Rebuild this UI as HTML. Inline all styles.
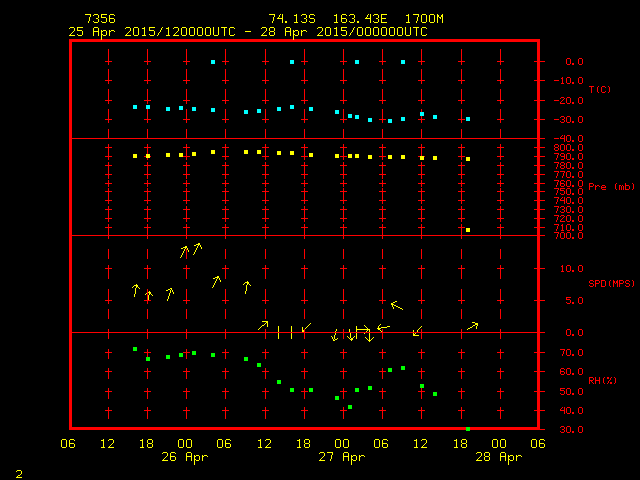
<!DOCTYPE html>
<html><head><meta charset="utf-8"><style>
html,body{margin:0;padding:0;background:#000;width:640px;height:480px;overflow:hidden}
svg{position:absolute;left:0;top:0}
</style></head><body>
<svg width="640" height="480" viewBox="0 0 640 480">
<rect x="0" y="0" width="640" height="480" fill="#000"/>
<defs><path id="l0" d="M0 0h6v1h-6zM5 1h1v1h-1zM5 2h1v1h-1zM4 3h1v1h-1zM4 4h1v1h-1zM4 5h1v1h-1zM4 6h1v1h-1zM3 7h1v1h-1zM3 8h1v1h-1z"/><path id="l1" d="M1 0h4v1h-4zM0 1h1v1h-1zM5 1h1v1h-1zM5 2h1v1h-1zM5 3h1v1h-1zM3 4h2v1h-2zM5 5h1v1h-1zM5 6h1v1h-1zM0 7h1v1h-1zM5 7h1v1h-1zM1 8h4v1h-4z"/><path id="l2" d="M0 0h6v1h-6zM0 1h1v1h-1zM0 2h1v1h-1zM0 3h5v1h-5zM5 4h1v1h-1zM5 5h1v1h-1zM5 6h1v1h-1zM0 7h1v1h-1zM5 7h1v1h-1zM1 8h4v1h-4z"/><path id="l3" d="M1 0h4v1h-4zM0 1h1v1h-1zM5 1h1v1h-1zM0 2h1v1h-1zM0 3h1v1h-1zM0 4h5v1h-5zM0 5h1v1h-1zM5 5h1v1h-1zM0 6h1v1h-1zM5 6h1v1h-1zM0 7h1v1h-1zM5 7h1v1h-1zM1 8h4v1h-4z"/><path id="l4" d="M3 0h1v1h-1zM5 0h1v1h-1zM2 1h1v1h-1zM5 1h1v1h-1zM2 2h1v1h-1zM5 2h1v1h-1zM1 3h1v1h-1zM5 3h1v1h-1zM0 4h6v1h-6zM5 5h1v1h-1zM5 6h1v1h-1zM5 7h1v1h-1zM5 8h1v1h-1z"/><path id="l5" d="M0 7h2v1h-2zM0 8h2v1h-2z"/><path id="l6" d="M3 0h1v1h-1zM1 1h3v1h-3zM3 2h1v1h-1zM3 3h1v1h-1zM3 4h1v1h-1zM3 5h1v1h-1zM3 6h1v1h-1zM3 7h1v1h-1zM1 8h4v1h-4z"/><path id="l7" d="M1 0h4v1h-4zM0 1h1v1h-1zM5 1h1v1h-1zM0 2h1v1h-1zM0 3h1v1h-1zM1 4h4v1h-4zM5 5h1v1h-1zM5 6h1v1h-1zM0 7h1v1h-1zM5 7h1v1h-1zM1 8h4v1h-4z"/><path id="l8" d="M0 0h6v1h-6zM0 1h1v1h-1zM0 2h1v1h-1zM0 3h1v1h-1zM0 4h5v1h-5zM0 5h1v1h-1zM0 6h1v1h-1zM0 7h1v1h-1zM0 8h6v1h-6z"/><path id="l9" d="M1 0h4v1h-4zM0 1h1v1h-1zM5 1h1v1h-1zM0 2h1v1h-1zM5 2h1v1h-1zM0 3h1v1h-1zM5 3h1v1h-1zM0 4h1v1h-1zM5 4h1v1h-1zM0 5h1v1h-1zM5 5h1v1h-1zM0 6h1v1h-1zM5 6h1v1h-1zM0 7h1v1h-1zM5 7h1v1h-1zM1 8h4v1h-4z"/><path id="l10" d="M0 0h1v1h-1zM5 0h1v1h-1zM0 1h2v1h-2zM4 1h2v1h-2zM0 2h2v1h-2zM4 2h2v1h-2zM0 3h1v1h-1zM2 3h2v1h-2zM5 3h1v1h-1zM0 4h1v1h-1zM3 4h1v1h-1zM5 4h1v1h-1zM0 5h1v1h-1zM5 5h1v1h-1zM0 6h1v1h-1zM5 6h1v1h-1zM0 7h1v1h-1zM5 7h1v1h-1zM0 8h1v1h-1zM5 8h1v1h-1z"/><path id="l11" d="M1 0h4v1h-4zM0 1h1v1h-1zM5 1h1v1h-1zM5 2h1v1h-1zM5 3h1v1h-1zM4 4h1v1h-1zM3 5h1v1h-1zM2 6h1v1h-1zM1 7h1v1h-1zM0 8h6v1h-6z"/><path id="l12" d="M1 0h4v1h-4zM0 1h1v1h-1zM5 1h1v1h-1zM0 2h1v1h-1zM5 2h1v1h-1zM0 3h1v1h-1zM5 3h1v1h-1zM0 4h6v1h-6zM0 5h1v1h-1zM5 5h1v1h-1zM0 6h1v1h-1zM5 6h1v1h-1zM0 7h1v1h-1zM5 7h1v1h-1zM0 8h1v1h-1zM5 8h1v1h-1z"/><path id="l13" d="M0 3h1v1h-1zM2 3h3v1h-3zM0 4h2v1h-2zM5 4h1v1h-1zM0 5h1v1h-1zM5 5h1v1h-1zM0 6h1v1h-1zM5 6h1v1h-1zM0 7h2v1h-2zM5 7h1v1h-1zM0 8h1v1h-1zM2 8h3v1h-3zM0 9h1v1h-1zM0 10h1v1h-1zM0 11h1v1h-1zM0 12h1v1h-1z"/><path id="l14" d="M0 3h1v1h-1zM2 3h3v1h-3zM0 4h2v1h-2zM5 4h1v1h-1zM0 5h1v1h-1zM0 6h1v1h-1zM0 7h1v1h-1zM0 8h1v1h-1z"/><path id="l15" d="M5 0h1v1h-1zM4 1h1v1h-1zM4 2h1v1h-1zM3 3h1v1h-1zM3 4h1v1h-1zM2 5h1v1h-1zM1 6h1v1h-1zM1 7h1v1h-1zM0 8h1v1h-1z"/><path id="l16" d="M0 0h1v1h-1zM5 0h1v1h-1zM0 1h1v1h-1zM5 1h1v1h-1zM0 2h1v1h-1zM5 2h1v1h-1zM0 3h1v1h-1zM5 3h1v1h-1zM0 4h1v1h-1zM5 4h1v1h-1zM0 5h1v1h-1zM5 5h1v1h-1zM0 6h1v1h-1zM5 6h1v1h-1zM0 7h1v1h-1zM5 7h1v1h-1zM1 8h4v1h-4z"/><path id="l17" d="M0 0h6v1h-6zM3 1h1v1h-1zM3 2h1v1h-1zM3 3h1v1h-1zM3 4h1v1h-1zM3 5h1v1h-1zM3 6h1v1h-1zM3 7h1v1h-1zM3 8h1v1h-1z"/><path id="l18" d="M1 0h4v1h-4zM0 1h1v1h-1zM5 1h1v1h-1zM0 2h1v1h-1zM0 3h1v1h-1zM0 4h1v1h-1zM0 5h1v1h-1zM0 6h1v1h-1zM0 7h1v1h-1zM5 7h1v1h-1zM1 8h4v1h-4z"/><path id="l19" d="M0 4h6v1h-6z"/><path id="l20" d="M1 0h4v1h-4zM0 1h1v1h-1zM5 1h1v1h-1zM0 2h1v1h-1zM5 2h1v1h-1zM0 3h1v1h-1zM5 3h1v1h-1zM1 4h4v1h-4zM0 5h1v1h-1zM5 5h1v1h-1zM0 6h1v1h-1zM5 6h1v1h-1zM0 7h1v1h-1zM5 7h1v1h-1zM1 8h4v1h-4z"/><path id="tiny2" d="M1 0h4v1h-4zM0 1h1v1h-1zM5 1h1v1h-1zM5 2h1v1h-1zM5 3h1v1h-1zM4 4h1v1h-1zM2 5h2v1h-2zM1 6h1v1h-1zM0 7h6v1h-6z"/><path id="s21" d="M1 0h3v1h-3zM0 1h1v1h-1zM4 1h1v1h-1zM0 2h1v1h-1zM4 2h1v1h-1zM0 3h1v1h-1zM4 3h1v1h-1zM0 4h1v1h-1zM4 4h1v1h-1zM0 5h1v1h-1zM4 5h1v1h-1zM1 6h3v1h-3z"/><path id="s22" d="M0 5h2v1h-2zM0 6h2v1h-2z"/><path id="s23" d="M0 3h5v1h-5z"/><path id="s24" d="M2 0h1v1h-1zM1 1h2v1h-2zM2 2h1v1h-1zM2 3h1v1h-1zM2 4h1v1h-1zM2 5h1v1h-1zM1 6h3v1h-3z"/><path id="s25" d="M1 0h3v1h-3zM0 1h1v1h-1zM4 1h1v1h-1zM3 2h1v1h-1zM2 3h1v1h-1zM1 4h1v1h-1zM0 5h1v1h-1zM0 6h5v1h-5z"/><path id="s26" d="M1 0h3v1h-3zM0 1h1v1h-1zM4 1h1v1h-1zM4 2h1v1h-1zM2 3h2v1h-2zM4 4h1v1h-1zM0 5h1v1h-1zM4 5h1v1h-1zM1 6h3v1h-3z"/><path id="s27" d="M2 0h1v1h-1zM4 0h1v1h-1zM1 1h1v1h-1zM4 1h1v1h-1zM0 2h1v1h-1zM4 2h1v1h-1zM0 3h5v1h-5zM4 4h1v1h-1zM4 5h1v1h-1zM4 6h1v1h-1z"/><path id="s28" d="M1 0h3v1h-3zM0 1h1v1h-1zM4 1h1v1h-1zM0 2h1v1h-1zM4 2h1v1h-1zM1 3h3v1h-3zM0 4h1v1h-1zM4 4h1v1h-1zM0 5h1v1h-1zM4 5h1v1h-1zM1 6h3v1h-3z"/><path id="s29" d="M0 0h5v1h-5zM4 1h1v1h-1zM3 2h1v1h-1zM3 3h1v1h-1zM3 4h1v1h-1zM2 5h1v1h-1zM2 6h1v1h-1z"/><path id="s30" d="M1 0h3v1h-3zM0 1h1v1h-1zM4 1h1v1h-1zM0 2h1v1h-1zM4 2h1v1h-1zM1 3h4v1h-4zM4 4h1v1h-1zM4 5h1v1h-1zM1 6h3v1h-3z"/><path id="s31" d="M1 0h3v1h-3zM0 1h1v1h-1zM4 1h1v1h-1zM0 2h1v1h-1zM0 3h4v1h-4zM0 4h1v1h-1zM4 4h1v1h-1zM0 5h1v1h-1zM4 5h1v1h-1zM1 6h3v1h-3z"/><path id="s32" d="M0 0h5v1h-5zM0 1h1v1h-1zM0 2h4v1h-4zM4 3h1v1h-1zM4 4h1v1h-1zM0 5h1v1h-1zM4 5h1v1h-1zM1 6h3v1h-3z"/><path id="s33" d="M0 0h5v1h-5zM2 1h1v1h-1zM2 2h1v1h-1zM2 3h1v1h-1zM2 4h1v1h-1zM2 5h1v1h-1zM2 6h1v1h-1z"/><path id="s34" d="M3 0h1v1h-1zM2 1h1v1h-1zM2 2h1v1h-1zM2 3h1v1h-1zM2 4h1v1h-1zM2 5h1v1h-1zM3 6h1v1h-1z"/><path id="s35" d="M1 0h3v1h-3zM0 1h1v1h-1zM4 1h1v1h-1zM0 2h1v1h-1zM0 3h1v1h-1zM0 4h1v1h-1zM0 5h1v1h-1zM4 5h1v1h-1zM1 6h3v1h-3z"/><path id="s36" d="M1 0h1v1h-1zM2 1h1v1h-1zM2 2h1v1h-1zM2 3h1v1h-1zM2 4h1v1h-1zM2 5h1v1h-1zM1 6h1v1h-1z"/><path id="s37" d="M0 0h4v1h-4zM0 1h1v1h-1zM4 1h1v1h-1zM0 2h1v1h-1zM4 2h1v1h-1zM0 3h4v1h-4zM0 4h1v1h-1zM0 5h1v1h-1zM0 6h1v1h-1z"/><path id="s38" d="M0 2h1v1h-1zM2 2h2v1h-2zM0 3h2v1h-2zM4 3h1v1h-1zM0 4h1v1h-1zM0 5h1v1h-1zM0 6h1v1h-1z"/><path id="s39" d="M1 2h3v1h-3zM0 3h1v1h-1zM4 3h1v1h-1zM0 4h5v1h-5zM0 5h1v1h-1zM1 6h4v1h-4z"/><path id="s40" d="M0 2h2v1h-2zM3 2h1v1h-1zM0 3h1v1h-1zM2 3h1v1h-1zM4 3h1v1h-1zM0 4h1v1h-1zM2 4h1v1h-1zM4 4h1v1h-1zM0 5h1v1h-1zM2 5h1v1h-1zM4 5h1v1h-1zM0 6h1v1h-1zM2 6h1v1h-1zM4 6h1v1h-1z"/><path id="s41" d="M0 0h1v1h-1zM0 1h1v1h-1zM0 2h4v1h-4zM0 3h1v1h-1zM4 3h1v1h-1zM0 4h1v1h-1zM4 4h1v1h-1zM0 5h1v1h-1zM4 5h1v1h-1zM0 6h4v1h-4z"/><path id="s42" d="M1 0h3v1h-3zM0 1h1v1h-1zM4 1h1v1h-1zM0 2h1v1h-1zM1 3h3v1h-3zM4 4h1v1h-1zM0 5h1v1h-1zM4 5h1v1h-1zM1 6h3v1h-3z"/><path id="s43" d="M0 0h4v1h-4zM0 1h1v1h-1zM4 1h1v1h-1zM0 2h1v1h-1zM4 2h1v1h-1zM0 3h1v1h-1zM4 3h1v1h-1zM0 4h1v1h-1zM4 4h1v1h-1zM0 5h1v1h-1zM4 5h1v1h-1zM0 6h4v1h-4z"/><path id="s44" d="M0 0h1v1h-1zM4 0h1v1h-1zM0 1h2v1h-2zM3 1h2v1h-2zM0 2h2v1h-2zM3 2h2v1h-2zM0 3h1v1h-1zM2 3h1v1h-1zM4 3h1v1h-1zM0 4h1v1h-1zM4 4h1v1h-1zM0 5h1v1h-1zM4 5h1v1h-1zM0 6h1v1h-1zM4 6h1v1h-1z"/><path id="s45" d="M0 0h4v1h-4zM0 1h1v1h-1zM4 1h1v1h-1zM0 2h1v1h-1zM4 2h1v1h-1zM0 3h4v1h-4zM0 4h1v1h-1zM2 4h1v1h-1zM0 5h1v1h-1zM3 5h1v1h-1zM0 6h1v1h-1zM4 6h1v1h-1z"/><path id="s46" d="M0 0h1v1h-1zM4 0h1v1h-1zM0 1h1v1h-1zM4 1h1v1h-1zM0 2h1v1h-1zM4 2h1v1h-1zM0 3h5v1h-5zM0 4h1v1h-1zM4 4h1v1h-1zM0 5h1v1h-1zM4 5h1v1h-1zM0 6h1v1h-1zM4 6h1v1h-1z"/><path id="s47" d="M0 0h2v1h-2zM4 0h1v1h-1zM0 1h2v1h-2zM3 1h1v1h-1zM3 2h1v1h-1zM2 3h1v1h-1zM1 4h1v1h-1zM1 5h1v1h-1zM3 5h2v1h-2zM0 6h1v1h-1zM3 6h2v1h-2z"/></defs>
<g shape-rendering="crispEdges"><path d="M132 287h1v1h-1zM133 286h1v1h-1zM134 285h1v1h-1zM134 294h1v3h-1zM135 285h1v1h-1zM135 288h1v6h-1zM136 284h1v4h-1zM137 285h1v2h-1zM138 287h1v1h-1zM139 288h1v1h-1zM145 294h1v1h-1zM146 293h1v1h-1zM147 292h1v1h-1zM147 301h1v3h-1zM148 292h1v1h-1zM148 295h1v6h-1zM149 291h1v4h-1zM150 292h1v2h-1zM151 294h1v1h-1zM152 295h1v1h-1zM166 290h1v1h-1zM167 290h1v1h-1zM167 299h1v2h-1zM168 289h1v1h-1zM168 296h1v3h-1zM169 289h1v1h-1zM169 293h1v3h-1zM170 288h1v1h-1zM170 290h1v3h-1zM171 288h1v2h-1zM172 290h1v2h-1zM173 292h1v2h-1zM180 257h1v1h-1zM181 248h1v1h-1zM181 255h1v2h-1zM182 248h1v1h-1zM182 253h1v2h-1zM183 247h1v1h-1zM183 251h1v2h-1zM184 247h1v1h-1zM184 249h1v2h-1zM185 246h1v3h-1zM186 246h1v2h-1zM187 248h1v2h-1zM188 250h1v2h-1zM193 254h1v1h-1zM194 245h1v1h-1zM194 252h1v2h-1zM195 245h1v1h-1zM195 250h1v2h-1zM196 244h1v1h-1zM196 248h1v2h-1zM197 244h1v1h-1zM197 246h1v2h-1zM198 243h1v3h-1zM199 243h1v2h-1zM200 245h1v2h-1zM201 247h1v2h-1zM212 287h1v1h-1zM213 278h1v1h-1zM213 285h1v2h-1zM214 278h1v1h-1zM214 283h1v2h-1zM215 277h1v1h-1zM215 281h1v2h-1zM216 277h1v1h-1zM216 279h1v2h-1zM217 276h1v3h-1zM218 276h1v2h-1zM219 278h1v2h-1zM220 280h1v2h-1zM243 284h1v1h-1zM244 283h1v1h-1zM245 282h1v1h-1zM245 291h1v3h-1zM246 282h1v1h-1zM246 285h1v6h-1zM247 281h1v4h-1zM248 282h1v2h-1zM249 284h1v1h-1zM250 285h1v1h-1zM258 329h1v1h-1zM259 328h1v1h-1zM260 327h1v1h-1zM261 326h1v1h-1zM262 321h1v1h-1zM262 325h1v1h-1zM263 321h1v1h-1zM263 325h1v1h-1zM264 321h1v1h-1zM264 324h1v1h-1zM265 321h1v1h-1zM265 323h1v1h-1zM266 321h1v2h-1zM267 321h1v6h-1zM278 326h1v13h-1zM291 326h1v13h-1zM302 327h1v5h-1zM303 330h1v2h-1zM304 329h1v1h-1zM305 328h1v1h-1zM306 327h1v1h-1zM307 326h1v1h-1zM308 325h1v1h-1zM309 324h1v1h-1zM310 323h1v1h-1zM331 336h1v1h-1zM332 337h1v2h-1zM333 339h1v2h-1zM334 335h1v4h-1zM334 340h1v1h-1zM335 331h1v4h-1zM335 339h1v1h-1zM336 329h1v2h-1zM336 339h1v1h-1zM337 338h1v1h-1zM347 336h1v1h-1zM348 337h1v1h-1zM349 329h1v3h-1zM349 338h1v1h-1zM350 332h1v6h-1zM350 339h1v1h-1zM351 338h1v3h-1zM352 338h1v2h-1zM353 337h1v1h-1zM354 336h1v1h-1zM356 326h1v13h-1zM357 329h1v1h-1zM358 329h1v1h-1zM359 329h1v1h-1zM360 329h1v1h-1zM361 329h1v1h-1zM362 329h1v1h-1zM363 329h1v1h-1zM364 325h1v1h-1zM364 329h1v1h-1zM364 333h1v1h-1zM365 326h1v1h-1zM365 329h1v1h-1zM365 332h1v1h-1zM365 337h1v1h-1zM366 327h1v1h-1zM366 329h1v1h-1zM366 331h1v1h-1zM366 338h1v1h-1zM367 328h1v3h-1zM367 339h1v1h-1zM368 329h1v1h-1zM368 340h1v1h-1zM369 329h1v13h-1zM370 340h1v1h-1zM371 339h1v1h-1zM372 338h1v1h-1zM373 337h1v1h-1zM377 328h1v1h-1zM378 326h1v4h-1zM379 325h1v1h-1zM379 328h1v2h-1zM380 324h1v1h-1zM380 328h1v1h-1zM380 330h1v1h-1zM381 327h1v1h-1zM381 331h1v1h-1zM382 327h1v1h-1zM383 327h1v1h-1zM384 327h1v1h-1zM385 327h1v1h-1zM386 327h1v1h-1zM387 326h1v1h-1zM388 326h1v1h-1zM389 326h1v1h-1zM391 303h1v2h-1zM392 303h1v4h-1zM393 302h1v1h-1zM393 304h1v1h-1zM393 307h1v2h-1zM394 302h1v1h-1zM394 305h1v1h-1zM395 301h1v1h-1zM395 305h1v1h-1zM396 301h1v1h-1zM396 306h1v1h-1zM397 306h1v1h-1zM398 307h1v1h-1zM399 307h1v1h-1zM400 308h1v1h-1zM401 308h1v1h-1zM402 309h1v1h-1zM413 330h1v6h-1zM414 334h1v2h-1zM415 333h1v1h-1zM415 335h1v1h-1zM416 332h1v1h-1zM416 335h1v1h-1zM417 330h1v2h-1zM417 335h1v1h-1zM418 329h1v1h-1zM418 335h1v1h-1zM419 328h1v1h-1zM420 327h1v1h-1zM421 326h1v1h-1zM467 329h1v1h-1zM468 328h1v1h-1zM469 328h1v1h-1zM470 327h1v1h-1zM471 327h1v1h-1zM472 322h1v1h-1zM472 326h1v1h-1zM473 322h1v1h-1zM473 325h1v1h-1zM474 322h1v1h-1zM474 325h1v1h-1zM475 323h1v2h-1zM476 323h1v2h-1zM476 326h1v3h-1zM477 323h1v3h-1z" fill="#ffff00"/><rect x="108" y="49" width="1" height="10" fill="#ff0000"/><rect x="108" y="69" width="1" height="10" fill="#ff0000"/><rect x="108" y="89" width="1" height="10" fill="#ff0000"/><rect x="108" y="109" width="1" height="10" fill="#ff0000"/><rect x="108" y="129" width="1" height="10" fill="#ff0000"/><rect x="108" y="149" width="1" height="10" fill="#ff0000"/><rect x="108" y="169" width="1" height="10" fill="#ff0000"/><rect x="108" y="189" width="1" height="10" fill="#ff0000"/><rect x="108" y="209" width="1" height="10" fill="#ff0000"/><rect x="108" y="229" width="1" height="10" fill="#ff0000"/><rect x="108" y="249" width="1" height="10" fill="#ff0000"/><rect x="108" y="269" width="1" height="10" fill="#ff0000"/><rect x="108" y="289" width="1" height="10" fill="#ff0000"/><rect x="108" y="309" width="1" height="10" fill="#ff0000"/><rect x="108" y="329" width="1" height="10" fill="#ff0000"/><rect x="108" y="349" width="1" height="10" fill="#ff0000"/><rect x="108" y="369" width="1" height="10" fill="#ff0000"/><rect x="108" y="389" width="1" height="10" fill="#ff0000"/><rect x="108" y="409" width="1" height="10" fill="#ff0000"/><rect x="108" y="58" width="1" height="7" fill="#ff0000"/><rect x="105" y="61" width="7" height="1" fill="#ff0000"/><rect x="108" y="77" width="1" height="7" fill="#ff0000"/><rect x="105" y="80" width="7" height="1" fill="#ff0000"/><rect x="108" y="97" width="1" height="7" fill="#ff0000"/><rect x="105" y="100" width="7" height="1" fill="#ff0000"/><rect x="108" y="116" width="1" height="7" fill="#ff0000"/><rect x="105" y="119" width="7" height="1" fill="#ff0000"/><rect x="108" y="144" width="1" height="7" fill="#ff0000"/><rect x="105" y="147" width="7" height="1" fill="#ff0000"/><rect x="108" y="153" width="1" height="7" fill="#ff0000"/><rect x="105" y="156" width="7" height="1" fill="#ff0000"/><rect x="108" y="162" width="1" height="7" fill="#ff0000"/><rect x="105" y="165" width="7" height="1" fill="#ff0000"/><rect x="108" y="171" width="1" height="7" fill="#ff0000"/><rect x="105" y="174" width="7" height="1" fill="#ff0000"/><rect x="108" y="180" width="1" height="7" fill="#ff0000"/><rect x="105" y="183" width="7" height="1" fill="#ff0000"/><rect x="108" y="188" width="1" height="7" fill="#ff0000"/><rect x="105" y="191" width="7" height="1" fill="#ff0000"/><rect x="108" y="197" width="1" height="7" fill="#ff0000"/><rect x="105" y="200" width="7" height="1" fill="#ff0000"/><rect x="108" y="206" width="1" height="7" fill="#ff0000"/><rect x="105" y="209" width="7" height="1" fill="#ff0000"/><rect x="108" y="215" width="1" height="7" fill="#ff0000"/><rect x="105" y="218" width="7" height="1" fill="#ff0000"/><rect x="108" y="224" width="1" height="7" fill="#ff0000"/><rect x="105" y="227" width="7" height="1" fill="#ff0000"/><rect x="108" y="265" width="1" height="7" fill="#ff0000"/><rect x="105" y="268" width="7" height="1" fill="#ff0000"/><rect x="108" y="297" width="1" height="7" fill="#ff0000"/><rect x="105" y="300" width="7" height="1" fill="#ff0000"/><rect x="108" y="349" width="1" height="7" fill="#ff0000"/><rect x="105" y="352" width="7" height="1" fill="#ff0000"/><rect x="108" y="368" width="1" height="7" fill="#ff0000"/><rect x="105" y="371" width="7" height="1" fill="#ff0000"/><rect x="108" y="388" width="1" height="7" fill="#ff0000"/><rect x="105" y="391" width="7" height="1" fill="#ff0000"/><rect x="108" y="407" width="1" height="7" fill="#ff0000"/><rect x="105" y="410" width="7" height="1" fill="#ff0000"/><rect x="147" y="49" width="1" height="10" fill="#ff0000"/><rect x="147" y="69" width="1" height="10" fill="#ff0000"/><rect x="147" y="89" width="1" height="10" fill="#ff0000"/><rect x="147" y="109" width="1" height="10" fill="#ff0000"/><rect x="147" y="129" width="1" height="10" fill="#ff0000"/><rect x="147" y="149" width="1" height="10" fill="#ff0000"/><rect x="147" y="169" width="1" height="10" fill="#ff0000"/><rect x="147" y="189" width="1" height="10" fill="#ff0000"/><rect x="147" y="209" width="1" height="10" fill="#ff0000"/><rect x="147" y="229" width="1" height="10" fill="#ff0000"/><rect x="147" y="249" width="1" height="10" fill="#ff0000"/><rect x="147" y="269" width="1" height="10" fill="#ff0000"/><rect x="147" y="289" width="1" height="10" fill="#ff0000"/><rect x="147" y="309" width="1" height="10" fill="#ff0000"/><rect x="147" y="329" width="1" height="10" fill="#ff0000"/><rect x="147" y="349" width="1" height="10" fill="#ff0000"/><rect x="147" y="369" width="1" height="10" fill="#ff0000"/><rect x="147" y="389" width="1" height="10" fill="#ff0000"/><rect x="147" y="409" width="1" height="10" fill="#ff0000"/><rect x="147" y="58" width="1" height="7" fill="#ff0000"/><rect x="144" y="61" width="7" height="1" fill="#ff0000"/><rect x="147" y="77" width="1" height="7" fill="#ff0000"/><rect x="144" y="80" width="7" height="1" fill="#ff0000"/><rect x="147" y="97" width="1" height="7" fill="#ff0000"/><rect x="144" y="100" width="7" height="1" fill="#ff0000"/><rect x="147" y="116" width="1" height="7" fill="#ff0000"/><rect x="144" y="119" width="7" height="1" fill="#ff0000"/><rect x="147" y="144" width="1" height="7" fill="#ff0000"/><rect x="144" y="147" width="7" height="1" fill="#ff0000"/><rect x="147" y="153" width="1" height="7" fill="#ff0000"/><rect x="144" y="156" width="7" height="1" fill="#ff0000"/><rect x="147" y="162" width="1" height="7" fill="#ff0000"/><rect x="144" y="165" width="7" height="1" fill="#ff0000"/><rect x="147" y="171" width="1" height="7" fill="#ff0000"/><rect x="144" y="174" width="7" height="1" fill="#ff0000"/><rect x="147" y="180" width="1" height="7" fill="#ff0000"/><rect x="144" y="183" width="7" height="1" fill="#ff0000"/><rect x="147" y="188" width="1" height="7" fill="#ff0000"/><rect x="144" y="191" width="7" height="1" fill="#ff0000"/><rect x="147" y="197" width="1" height="7" fill="#ff0000"/><rect x="144" y="200" width="7" height="1" fill="#ff0000"/><rect x="147" y="206" width="1" height="7" fill="#ff0000"/><rect x="144" y="209" width="7" height="1" fill="#ff0000"/><rect x="147" y="215" width="1" height="7" fill="#ff0000"/><rect x="144" y="218" width="7" height="1" fill="#ff0000"/><rect x="147" y="224" width="1" height="7" fill="#ff0000"/><rect x="144" y="227" width="7" height="1" fill="#ff0000"/><rect x="147" y="265" width="1" height="7" fill="#ff0000"/><rect x="144" y="268" width="7" height="1" fill="#ff0000"/><rect x="147" y="297" width="1" height="7" fill="#ff0000"/><rect x="144" y="300" width="7" height="1" fill="#ff0000"/><rect x="147" y="349" width="1" height="7" fill="#ff0000"/><rect x="144" y="352" width="7" height="1" fill="#ff0000"/><rect x="147" y="368" width="1" height="7" fill="#ff0000"/><rect x="144" y="371" width="7" height="1" fill="#ff0000"/><rect x="147" y="388" width="1" height="7" fill="#ff0000"/><rect x="144" y="391" width="7" height="1" fill="#ff0000"/><rect x="147" y="407" width="1" height="7" fill="#ff0000"/><rect x="144" y="410" width="7" height="1" fill="#ff0000"/><rect x="186" y="49" width="1" height="10" fill="#ff0000"/><rect x="186" y="69" width="1" height="10" fill="#ff0000"/><rect x="186" y="89" width="1" height="10" fill="#ff0000"/><rect x="186" y="109" width="1" height="10" fill="#ff0000"/><rect x="186" y="129" width="1" height="10" fill="#ff0000"/><rect x="186" y="149" width="1" height="10" fill="#ff0000"/><rect x="186" y="169" width="1" height="10" fill="#ff0000"/><rect x="186" y="189" width="1" height="10" fill="#ff0000"/><rect x="186" y="209" width="1" height="10" fill="#ff0000"/><rect x="186" y="229" width="1" height="10" fill="#ff0000"/><rect x="186" y="249" width="1" height="10" fill="#ff0000"/><rect x="186" y="269" width="1" height="10" fill="#ff0000"/><rect x="186" y="289" width="1" height="10" fill="#ff0000"/><rect x="186" y="309" width="1" height="10" fill="#ff0000"/><rect x="186" y="329" width="1" height="10" fill="#ff0000"/><rect x="186" y="349" width="1" height="10" fill="#ff0000"/><rect x="186" y="369" width="1" height="10" fill="#ff0000"/><rect x="186" y="389" width="1" height="10" fill="#ff0000"/><rect x="186" y="409" width="1" height="10" fill="#ff0000"/><rect x="186" y="58" width="1" height="7" fill="#ff0000"/><rect x="183" y="61" width="7" height="1" fill="#ff0000"/><rect x="186" y="77" width="1" height="7" fill="#ff0000"/><rect x="183" y="80" width="7" height="1" fill="#ff0000"/><rect x="186" y="97" width="1" height="7" fill="#ff0000"/><rect x="183" y="100" width="7" height="1" fill="#ff0000"/><rect x="186" y="116" width="1" height="7" fill="#ff0000"/><rect x="183" y="119" width="7" height="1" fill="#ff0000"/><rect x="186" y="144" width="1" height="7" fill="#ff0000"/><rect x="183" y="147" width="7" height="1" fill="#ff0000"/><rect x="186" y="153" width="1" height="7" fill="#ff0000"/><rect x="183" y="156" width="7" height="1" fill="#ff0000"/><rect x="186" y="162" width="1" height="7" fill="#ff0000"/><rect x="183" y="165" width="7" height="1" fill="#ff0000"/><rect x="186" y="171" width="1" height="7" fill="#ff0000"/><rect x="183" y="174" width="7" height="1" fill="#ff0000"/><rect x="186" y="180" width="1" height="7" fill="#ff0000"/><rect x="183" y="183" width="7" height="1" fill="#ff0000"/><rect x="186" y="188" width="1" height="7" fill="#ff0000"/><rect x="183" y="191" width="7" height="1" fill="#ff0000"/><rect x="186" y="197" width="1" height="7" fill="#ff0000"/><rect x="183" y="200" width="7" height="1" fill="#ff0000"/><rect x="186" y="206" width="1" height="7" fill="#ff0000"/><rect x="183" y="209" width="7" height="1" fill="#ff0000"/><rect x="186" y="215" width="1" height="7" fill="#ff0000"/><rect x="183" y="218" width="7" height="1" fill="#ff0000"/><rect x="186" y="224" width="1" height="7" fill="#ff0000"/><rect x="183" y="227" width="7" height="1" fill="#ff0000"/><rect x="186" y="265" width="1" height="7" fill="#ff0000"/><rect x="183" y="268" width="7" height="1" fill="#ff0000"/><rect x="186" y="297" width="1" height="7" fill="#ff0000"/><rect x="183" y="300" width="7" height="1" fill="#ff0000"/><rect x="186" y="349" width="1" height="7" fill="#ff0000"/><rect x="183" y="352" width="7" height="1" fill="#ff0000"/><rect x="186" y="368" width="1" height="7" fill="#ff0000"/><rect x="183" y="371" width="7" height="1" fill="#ff0000"/><rect x="186" y="388" width="1" height="7" fill="#ff0000"/><rect x="183" y="391" width="7" height="1" fill="#ff0000"/><rect x="186" y="407" width="1" height="7" fill="#ff0000"/><rect x="183" y="410" width="7" height="1" fill="#ff0000"/><rect x="225" y="49" width="1" height="10" fill="#ff0000"/><rect x="225" y="69" width="1" height="10" fill="#ff0000"/><rect x="225" y="89" width="1" height="10" fill="#ff0000"/><rect x="225" y="109" width="1" height="10" fill="#ff0000"/><rect x="225" y="129" width="1" height="10" fill="#ff0000"/><rect x="225" y="149" width="1" height="10" fill="#ff0000"/><rect x="225" y="169" width="1" height="10" fill="#ff0000"/><rect x="225" y="189" width="1" height="10" fill="#ff0000"/><rect x="225" y="209" width="1" height="10" fill="#ff0000"/><rect x="225" y="229" width="1" height="10" fill="#ff0000"/><rect x="225" y="249" width="1" height="10" fill="#ff0000"/><rect x="225" y="269" width="1" height="10" fill="#ff0000"/><rect x="225" y="289" width="1" height="10" fill="#ff0000"/><rect x="225" y="309" width="1" height="10" fill="#ff0000"/><rect x="225" y="329" width="1" height="10" fill="#ff0000"/><rect x="225" y="349" width="1" height="10" fill="#ff0000"/><rect x="225" y="369" width="1" height="10" fill="#ff0000"/><rect x="225" y="389" width="1" height="10" fill="#ff0000"/><rect x="225" y="409" width="1" height="10" fill="#ff0000"/><rect x="225" y="58" width="1" height="7" fill="#ff0000"/><rect x="222" y="61" width="7" height="1" fill="#ff0000"/><rect x="225" y="77" width="1" height="7" fill="#ff0000"/><rect x="222" y="80" width="7" height="1" fill="#ff0000"/><rect x="225" y="97" width="1" height="7" fill="#ff0000"/><rect x="222" y="100" width="7" height="1" fill="#ff0000"/><rect x="225" y="116" width="1" height="7" fill="#ff0000"/><rect x="222" y="119" width="7" height="1" fill="#ff0000"/><rect x="225" y="144" width="1" height="7" fill="#ff0000"/><rect x="222" y="147" width="7" height="1" fill="#ff0000"/><rect x="225" y="153" width="1" height="7" fill="#ff0000"/><rect x="222" y="156" width="7" height="1" fill="#ff0000"/><rect x="225" y="162" width="1" height="7" fill="#ff0000"/><rect x="222" y="165" width="7" height="1" fill="#ff0000"/><rect x="225" y="171" width="1" height="7" fill="#ff0000"/><rect x="222" y="174" width="7" height="1" fill="#ff0000"/><rect x="225" y="180" width="1" height="7" fill="#ff0000"/><rect x="222" y="183" width="7" height="1" fill="#ff0000"/><rect x="225" y="188" width="1" height="7" fill="#ff0000"/><rect x="222" y="191" width="7" height="1" fill="#ff0000"/><rect x="225" y="197" width="1" height="7" fill="#ff0000"/><rect x="222" y="200" width="7" height="1" fill="#ff0000"/><rect x="225" y="206" width="1" height="7" fill="#ff0000"/><rect x="222" y="209" width="7" height="1" fill="#ff0000"/><rect x="225" y="215" width="1" height="7" fill="#ff0000"/><rect x="222" y="218" width="7" height="1" fill="#ff0000"/><rect x="225" y="224" width="1" height="7" fill="#ff0000"/><rect x="222" y="227" width="7" height="1" fill="#ff0000"/><rect x="225" y="265" width="1" height="7" fill="#ff0000"/><rect x="222" y="268" width="7" height="1" fill="#ff0000"/><rect x="225" y="297" width="1" height="7" fill="#ff0000"/><rect x="222" y="300" width="7" height="1" fill="#ff0000"/><rect x="225" y="349" width="1" height="7" fill="#ff0000"/><rect x="222" y="352" width="7" height="1" fill="#ff0000"/><rect x="225" y="368" width="1" height="7" fill="#ff0000"/><rect x="222" y="371" width="7" height="1" fill="#ff0000"/><rect x="225" y="388" width="1" height="7" fill="#ff0000"/><rect x="222" y="391" width="7" height="1" fill="#ff0000"/><rect x="225" y="407" width="1" height="7" fill="#ff0000"/><rect x="222" y="410" width="7" height="1" fill="#ff0000"/><rect x="265" y="49" width="1" height="10" fill="#ff0000"/><rect x="265" y="69" width="1" height="10" fill="#ff0000"/><rect x="265" y="89" width="1" height="10" fill="#ff0000"/><rect x="265" y="109" width="1" height="10" fill="#ff0000"/><rect x="265" y="129" width="1" height="10" fill="#ff0000"/><rect x="265" y="149" width="1" height="10" fill="#ff0000"/><rect x="265" y="169" width="1" height="10" fill="#ff0000"/><rect x="265" y="189" width="1" height="10" fill="#ff0000"/><rect x="265" y="209" width="1" height="10" fill="#ff0000"/><rect x="265" y="229" width="1" height="10" fill="#ff0000"/><rect x="265" y="249" width="1" height="10" fill="#ff0000"/><rect x="265" y="269" width="1" height="10" fill="#ff0000"/><rect x="265" y="289" width="1" height="10" fill="#ff0000"/><rect x="265" y="309" width="1" height="10" fill="#ff0000"/><rect x="265" y="329" width="1" height="10" fill="#ff0000"/><rect x="265" y="349" width="1" height="10" fill="#ff0000"/><rect x="265" y="369" width="1" height="10" fill="#ff0000"/><rect x="265" y="389" width="1" height="10" fill="#ff0000"/><rect x="265" y="409" width="1" height="10" fill="#ff0000"/><rect x="265" y="58" width="1" height="7" fill="#ff0000"/><rect x="262" y="61" width="7" height="1" fill="#ff0000"/><rect x="265" y="77" width="1" height="7" fill="#ff0000"/><rect x="262" y="80" width="7" height="1" fill="#ff0000"/><rect x="265" y="97" width="1" height="7" fill="#ff0000"/><rect x="262" y="100" width="7" height="1" fill="#ff0000"/><rect x="265" y="116" width="1" height="7" fill="#ff0000"/><rect x="262" y="119" width="7" height="1" fill="#ff0000"/><rect x="265" y="144" width="1" height="7" fill="#ff0000"/><rect x="262" y="147" width="7" height="1" fill="#ff0000"/><rect x="265" y="153" width="1" height="7" fill="#ff0000"/><rect x="262" y="156" width="7" height="1" fill="#ff0000"/><rect x="265" y="162" width="1" height="7" fill="#ff0000"/><rect x="262" y="165" width="7" height="1" fill="#ff0000"/><rect x="265" y="171" width="1" height="7" fill="#ff0000"/><rect x="262" y="174" width="7" height="1" fill="#ff0000"/><rect x="265" y="180" width="1" height="7" fill="#ff0000"/><rect x="262" y="183" width="7" height="1" fill="#ff0000"/><rect x="265" y="188" width="1" height="7" fill="#ff0000"/><rect x="262" y="191" width="7" height="1" fill="#ff0000"/><rect x="265" y="197" width="1" height="7" fill="#ff0000"/><rect x="262" y="200" width="7" height="1" fill="#ff0000"/><rect x="265" y="206" width="1" height="7" fill="#ff0000"/><rect x="262" y="209" width="7" height="1" fill="#ff0000"/><rect x="265" y="215" width="1" height="7" fill="#ff0000"/><rect x="262" y="218" width="7" height="1" fill="#ff0000"/><rect x="265" y="224" width="1" height="7" fill="#ff0000"/><rect x="262" y="227" width="7" height="1" fill="#ff0000"/><rect x="265" y="265" width="1" height="7" fill="#ff0000"/><rect x="262" y="268" width="7" height="1" fill="#ff0000"/><rect x="265" y="297" width="1" height="7" fill="#ff0000"/><rect x="262" y="300" width="7" height="1" fill="#ff0000"/><rect x="265" y="349" width="1" height="7" fill="#ff0000"/><rect x="262" y="352" width="7" height="1" fill="#ff0000"/><rect x="265" y="368" width="1" height="7" fill="#ff0000"/><rect x="262" y="371" width="7" height="1" fill="#ff0000"/><rect x="265" y="388" width="1" height="7" fill="#ff0000"/><rect x="262" y="391" width="7" height="1" fill="#ff0000"/><rect x="265" y="407" width="1" height="7" fill="#ff0000"/><rect x="262" y="410" width="7" height="1" fill="#ff0000"/><rect x="304" y="49" width="1" height="10" fill="#ff0000"/><rect x="304" y="69" width="1" height="10" fill="#ff0000"/><rect x="304" y="89" width="1" height="10" fill="#ff0000"/><rect x="304" y="109" width="1" height="10" fill="#ff0000"/><rect x="304" y="129" width="1" height="10" fill="#ff0000"/><rect x="304" y="149" width="1" height="10" fill="#ff0000"/><rect x="304" y="169" width="1" height="10" fill="#ff0000"/><rect x="304" y="189" width="1" height="10" fill="#ff0000"/><rect x="304" y="209" width="1" height="10" fill="#ff0000"/><rect x="304" y="229" width="1" height="10" fill="#ff0000"/><rect x="304" y="249" width="1" height="10" fill="#ff0000"/><rect x="304" y="269" width="1" height="10" fill="#ff0000"/><rect x="304" y="289" width="1" height="10" fill="#ff0000"/><rect x="304" y="309" width="1" height="10" fill="#ff0000"/><rect x="304" y="329" width="1" height="10" fill="#ff0000"/><rect x="304" y="349" width="1" height="10" fill="#ff0000"/><rect x="304" y="369" width="1" height="10" fill="#ff0000"/><rect x="304" y="389" width="1" height="10" fill="#ff0000"/><rect x="304" y="409" width="1" height="10" fill="#ff0000"/><rect x="304" y="58" width="1" height="7" fill="#ff0000"/><rect x="301" y="61" width="7" height="1" fill="#ff0000"/><rect x="304" y="77" width="1" height="7" fill="#ff0000"/><rect x="301" y="80" width="7" height="1" fill="#ff0000"/><rect x="304" y="97" width="1" height="7" fill="#ff0000"/><rect x="301" y="100" width="7" height="1" fill="#ff0000"/><rect x="304" y="116" width="1" height="7" fill="#ff0000"/><rect x="301" y="119" width="7" height="1" fill="#ff0000"/><rect x="304" y="144" width="1" height="7" fill="#ff0000"/><rect x="301" y="147" width="7" height="1" fill="#ff0000"/><rect x="304" y="153" width="1" height="7" fill="#ff0000"/><rect x="301" y="156" width="7" height="1" fill="#ff0000"/><rect x="304" y="162" width="1" height="7" fill="#ff0000"/><rect x="301" y="165" width="7" height="1" fill="#ff0000"/><rect x="304" y="171" width="1" height="7" fill="#ff0000"/><rect x="301" y="174" width="7" height="1" fill="#ff0000"/><rect x="304" y="180" width="1" height="7" fill="#ff0000"/><rect x="301" y="183" width="7" height="1" fill="#ff0000"/><rect x="304" y="188" width="1" height="7" fill="#ff0000"/><rect x="301" y="191" width="7" height="1" fill="#ff0000"/><rect x="304" y="197" width="1" height="7" fill="#ff0000"/><rect x="301" y="200" width="7" height="1" fill="#ff0000"/><rect x="304" y="206" width="1" height="7" fill="#ff0000"/><rect x="301" y="209" width="7" height="1" fill="#ff0000"/><rect x="304" y="215" width="1" height="7" fill="#ff0000"/><rect x="301" y="218" width="7" height="1" fill="#ff0000"/><rect x="304" y="224" width="1" height="7" fill="#ff0000"/><rect x="301" y="227" width="7" height="1" fill="#ff0000"/><rect x="304" y="265" width="1" height="7" fill="#ff0000"/><rect x="301" y="268" width="7" height="1" fill="#ff0000"/><rect x="304" y="297" width="1" height="7" fill="#ff0000"/><rect x="301" y="300" width="7" height="1" fill="#ff0000"/><rect x="304" y="349" width="1" height="7" fill="#ff0000"/><rect x="301" y="352" width="7" height="1" fill="#ff0000"/><rect x="304" y="368" width="1" height="7" fill="#ff0000"/><rect x="301" y="371" width="7" height="1" fill="#ff0000"/><rect x="304" y="388" width="1" height="7" fill="#ff0000"/><rect x="301" y="391" width="7" height="1" fill="#ff0000"/><rect x="304" y="407" width="1" height="7" fill="#ff0000"/><rect x="301" y="410" width="7" height="1" fill="#ff0000"/><rect x="343" y="49" width="1" height="10" fill="#ff0000"/><rect x="343" y="69" width="1" height="10" fill="#ff0000"/><rect x="343" y="89" width="1" height="10" fill="#ff0000"/><rect x="343" y="109" width="1" height="10" fill="#ff0000"/><rect x="343" y="129" width="1" height="10" fill="#ff0000"/><rect x="343" y="149" width="1" height="10" fill="#ff0000"/><rect x="343" y="169" width="1" height="10" fill="#ff0000"/><rect x="343" y="189" width="1" height="10" fill="#ff0000"/><rect x="343" y="209" width="1" height="10" fill="#ff0000"/><rect x="343" y="229" width="1" height="10" fill="#ff0000"/><rect x="343" y="249" width="1" height="10" fill="#ff0000"/><rect x="343" y="269" width="1" height="10" fill="#ff0000"/><rect x="343" y="289" width="1" height="10" fill="#ff0000"/><rect x="343" y="309" width="1" height="10" fill="#ff0000"/><rect x="343" y="329" width="1" height="10" fill="#ff0000"/><rect x="343" y="349" width="1" height="10" fill="#ff0000"/><rect x="343" y="369" width="1" height="10" fill="#ff0000"/><rect x="343" y="389" width="1" height="10" fill="#ff0000"/><rect x="343" y="409" width="1" height="10" fill="#ff0000"/><rect x="343" y="58" width="1" height="7" fill="#ff0000"/><rect x="340" y="61" width="7" height="1" fill="#ff0000"/><rect x="343" y="77" width="1" height="7" fill="#ff0000"/><rect x="340" y="80" width="7" height="1" fill="#ff0000"/><rect x="343" y="97" width="1" height="7" fill="#ff0000"/><rect x="340" y="100" width="7" height="1" fill="#ff0000"/><rect x="343" y="116" width="1" height="7" fill="#ff0000"/><rect x="340" y="119" width="7" height="1" fill="#ff0000"/><rect x="343" y="144" width="1" height="7" fill="#ff0000"/><rect x="340" y="147" width="7" height="1" fill="#ff0000"/><rect x="343" y="153" width="1" height="7" fill="#ff0000"/><rect x="340" y="156" width="7" height="1" fill="#ff0000"/><rect x="343" y="162" width="1" height="7" fill="#ff0000"/><rect x="340" y="165" width="7" height="1" fill="#ff0000"/><rect x="343" y="171" width="1" height="7" fill="#ff0000"/><rect x="340" y="174" width="7" height="1" fill="#ff0000"/><rect x="343" y="180" width="1" height="7" fill="#ff0000"/><rect x="340" y="183" width="7" height="1" fill="#ff0000"/><rect x="343" y="188" width="1" height="7" fill="#ff0000"/><rect x="340" y="191" width="7" height="1" fill="#ff0000"/><rect x="343" y="197" width="1" height="7" fill="#ff0000"/><rect x="340" y="200" width="7" height="1" fill="#ff0000"/><rect x="343" y="206" width="1" height="7" fill="#ff0000"/><rect x="340" y="209" width="7" height="1" fill="#ff0000"/><rect x="343" y="215" width="1" height="7" fill="#ff0000"/><rect x="340" y="218" width="7" height="1" fill="#ff0000"/><rect x="343" y="224" width="1" height="7" fill="#ff0000"/><rect x="340" y="227" width="7" height="1" fill="#ff0000"/><rect x="343" y="265" width="1" height="7" fill="#ff0000"/><rect x="340" y="268" width="7" height="1" fill="#ff0000"/><rect x="343" y="297" width="1" height="7" fill="#ff0000"/><rect x="340" y="300" width="7" height="1" fill="#ff0000"/><rect x="343" y="349" width="1" height="7" fill="#ff0000"/><rect x="340" y="352" width="7" height="1" fill="#ff0000"/><rect x="343" y="368" width="1" height="7" fill="#ff0000"/><rect x="340" y="371" width="7" height="1" fill="#ff0000"/><rect x="343" y="388" width="1" height="7" fill="#ff0000"/><rect x="340" y="391" width="7" height="1" fill="#ff0000"/><rect x="343" y="407" width="1" height="7" fill="#ff0000"/><rect x="340" y="410" width="7" height="1" fill="#ff0000"/><rect x="382" y="49" width="1" height="10" fill="#ff0000"/><rect x="382" y="69" width="1" height="10" fill="#ff0000"/><rect x="382" y="89" width="1" height="10" fill="#ff0000"/><rect x="382" y="109" width="1" height="10" fill="#ff0000"/><rect x="382" y="129" width="1" height="10" fill="#ff0000"/><rect x="382" y="149" width="1" height="10" fill="#ff0000"/><rect x="382" y="169" width="1" height="10" fill="#ff0000"/><rect x="382" y="189" width="1" height="10" fill="#ff0000"/><rect x="382" y="209" width="1" height="10" fill="#ff0000"/><rect x="382" y="229" width="1" height="10" fill="#ff0000"/><rect x="382" y="249" width="1" height="10" fill="#ff0000"/><rect x="382" y="269" width="1" height="10" fill="#ff0000"/><rect x="382" y="289" width="1" height="10" fill="#ff0000"/><rect x="382" y="309" width="1" height="10" fill="#ff0000"/><rect x="382" y="329" width="1" height="10" fill="#ff0000"/><rect x="382" y="349" width="1" height="10" fill="#ff0000"/><rect x="382" y="369" width="1" height="10" fill="#ff0000"/><rect x="382" y="389" width="1" height="10" fill="#ff0000"/><rect x="382" y="409" width="1" height="10" fill="#ff0000"/><rect x="382" y="58" width="1" height="7" fill="#ff0000"/><rect x="379" y="61" width="7" height="1" fill="#ff0000"/><rect x="382" y="77" width="1" height="7" fill="#ff0000"/><rect x="379" y="80" width="7" height="1" fill="#ff0000"/><rect x="382" y="97" width="1" height="7" fill="#ff0000"/><rect x="379" y="100" width="7" height="1" fill="#ff0000"/><rect x="382" y="116" width="1" height="7" fill="#ff0000"/><rect x="379" y="119" width="7" height="1" fill="#ff0000"/><rect x="382" y="144" width="1" height="7" fill="#ff0000"/><rect x="379" y="147" width="7" height="1" fill="#ff0000"/><rect x="382" y="153" width="1" height="7" fill="#ff0000"/><rect x="379" y="156" width="7" height="1" fill="#ff0000"/><rect x="382" y="162" width="1" height="7" fill="#ff0000"/><rect x="379" y="165" width="7" height="1" fill="#ff0000"/><rect x="382" y="171" width="1" height="7" fill="#ff0000"/><rect x="379" y="174" width="7" height="1" fill="#ff0000"/><rect x="382" y="180" width="1" height="7" fill="#ff0000"/><rect x="379" y="183" width="7" height="1" fill="#ff0000"/><rect x="382" y="188" width="1" height="7" fill="#ff0000"/><rect x="379" y="191" width="7" height="1" fill="#ff0000"/><rect x="382" y="197" width="1" height="7" fill="#ff0000"/><rect x="379" y="200" width="7" height="1" fill="#ff0000"/><rect x="382" y="206" width="1" height="7" fill="#ff0000"/><rect x="379" y="209" width="7" height="1" fill="#ff0000"/><rect x="382" y="215" width="1" height="7" fill="#ff0000"/><rect x="379" y="218" width="7" height="1" fill="#ff0000"/><rect x="382" y="224" width="1" height="7" fill="#ff0000"/><rect x="379" y="227" width="7" height="1" fill="#ff0000"/><rect x="382" y="265" width="1" height="7" fill="#ff0000"/><rect x="379" y="268" width="7" height="1" fill="#ff0000"/><rect x="382" y="297" width="1" height="7" fill="#ff0000"/><rect x="379" y="300" width="7" height="1" fill="#ff0000"/><rect x="382" y="349" width="1" height="7" fill="#ff0000"/><rect x="379" y="352" width="7" height="1" fill="#ff0000"/><rect x="382" y="368" width="1" height="7" fill="#ff0000"/><rect x="379" y="371" width="7" height="1" fill="#ff0000"/><rect x="382" y="388" width="1" height="7" fill="#ff0000"/><rect x="379" y="391" width="7" height="1" fill="#ff0000"/><rect x="382" y="407" width="1" height="7" fill="#ff0000"/><rect x="379" y="410" width="7" height="1" fill="#ff0000"/><rect x="421" y="49" width="1" height="10" fill="#ff0000"/><rect x="421" y="69" width="1" height="10" fill="#ff0000"/><rect x="421" y="89" width="1" height="10" fill="#ff0000"/><rect x="421" y="109" width="1" height="10" fill="#ff0000"/><rect x="421" y="129" width="1" height="10" fill="#ff0000"/><rect x="421" y="149" width="1" height="10" fill="#ff0000"/><rect x="421" y="169" width="1" height="10" fill="#ff0000"/><rect x="421" y="189" width="1" height="10" fill="#ff0000"/><rect x="421" y="209" width="1" height="10" fill="#ff0000"/><rect x="421" y="229" width="1" height="10" fill="#ff0000"/><rect x="421" y="249" width="1" height="10" fill="#ff0000"/><rect x="421" y="269" width="1" height="10" fill="#ff0000"/><rect x="421" y="289" width="1" height="10" fill="#ff0000"/><rect x="421" y="309" width="1" height="10" fill="#ff0000"/><rect x="421" y="329" width="1" height="10" fill="#ff0000"/><rect x="421" y="349" width="1" height="10" fill="#ff0000"/><rect x="421" y="369" width="1" height="10" fill="#ff0000"/><rect x="421" y="389" width="1" height="10" fill="#ff0000"/><rect x="421" y="409" width="1" height="10" fill="#ff0000"/><rect x="421" y="58" width="1" height="7" fill="#ff0000"/><rect x="418" y="61" width="7" height="1" fill="#ff0000"/><rect x="421" y="77" width="1" height="7" fill="#ff0000"/><rect x="418" y="80" width="7" height="1" fill="#ff0000"/><rect x="421" y="97" width="1" height="7" fill="#ff0000"/><rect x="418" y="100" width="7" height="1" fill="#ff0000"/><rect x="421" y="116" width="1" height="7" fill="#ff0000"/><rect x="418" y="119" width="7" height="1" fill="#ff0000"/><rect x="421" y="144" width="1" height="7" fill="#ff0000"/><rect x="418" y="147" width="7" height="1" fill="#ff0000"/><rect x="421" y="153" width="1" height="7" fill="#ff0000"/><rect x="418" y="156" width="7" height="1" fill="#ff0000"/><rect x="421" y="162" width="1" height="7" fill="#ff0000"/><rect x="418" y="165" width="7" height="1" fill="#ff0000"/><rect x="421" y="171" width="1" height="7" fill="#ff0000"/><rect x="418" y="174" width="7" height="1" fill="#ff0000"/><rect x="421" y="180" width="1" height="7" fill="#ff0000"/><rect x="418" y="183" width="7" height="1" fill="#ff0000"/><rect x="421" y="188" width="1" height="7" fill="#ff0000"/><rect x="418" y="191" width="7" height="1" fill="#ff0000"/><rect x="421" y="197" width="1" height="7" fill="#ff0000"/><rect x="418" y="200" width="7" height="1" fill="#ff0000"/><rect x="421" y="206" width="1" height="7" fill="#ff0000"/><rect x="418" y="209" width="7" height="1" fill="#ff0000"/><rect x="421" y="215" width="1" height="7" fill="#ff0000"/><rect x="418" y="218" width="7" height="1" fill="#ff0000"/><rect x="421" y="224" width="1" height="7" fill="#ff0000"/><rect x="418" y="227" width="7" height="1" fill="#ff0000"/><rect x="421" y="265" width="1" height="7" fill="#ff0000"/><rect x="418" y="268" width="7" height="1" fill="#ff0000"/><rect x="421" y="297" width="1" height="7" fill="#ff0000"/><rect x="418" y="300" width="7" height="1" fill="#ff0000"/><rect x="421" y="349" width="1" height="7" fill="#ff0000"/><rect x="418" y="352" width="7" height="1" fill="#ff0000"/><rect x="421" y="368" width="1" height="7" fill="#ff0000"/><rect x="418" y="371" width="7" height="1" fill="#ff0000"/><rect x="421" y="388" width="1" height="7" fill="#ff0000"/><rect x="418" y="391" width="7" height="1" fill="#ff0000"/><rect x="421" y="407" width="1" height="7" fill="#ff0000"/><rect x="418" y="410" width="7" height="1" fill="#ff0000"/><rect x="461" y="49" width="1" height="10" fill="#ff0000"/><rect x="461" y="69" width="1" height="10" fill="#ff0000"/><rect x="461" y="89" width="1" height="10" fill="#ff0000"/><rect x="461" y="109" width="1" height="10" fill="#ff0000"/><rect x="461" y="129" width="1" height="10" fill="#ff0000"/><rect x="461" y="149" width="1" height="10" fill="#ff0000"/><rect x="461" y="169" width="1" height="10" fill="#ff0000"/><rect x="461" y="189" width="1" height="10" fill="#ff0000"/><rect x="461" y="209" width="1" height="10" fill="#ff0000"/><rect x="461" y="229" width="1" height="10" fill="#ff0000"/><rect x="461" y="249" width="1" height="10" fill="#ff0000"/><rect x="461" y="269" width="1" height="10" fill="#ff0000"/><rect x="461" y="289" width="1" height="10" fill="#ff0000"/><rect x="461" y="309" width="1" height="10" fill="#ff0000"/><rect x="461" y="329" width="1" height="10" fill="#ff0000"/><rect x="461" y="349" width="1" height="10" fill="#ff0000"/><rect x="461" y="369" width="1" height="10" fill="#ff0000"/><rect x="461" y="389" width="1" height="10" fill="#ff0000"/><rect x="461" y="409" width="1" height="10" fill="#ff0000"/><rect x="461" y="58" width="1" height="7" fill="#ff0000"/><rect x="458" y="61" width="7" height="1" fill="#ff0000"/><rect x="461" y="77" width="1" height="7" fill="#ff0000"/><rect x="458" y="80" width="7" height="1" fill="#ff0000"/><rect x="461" y="97" width="1" height="7" fill="#ff0000"/><rect x="458" y="100" width="7" height="1" fill="#ff0000"/><rect x="461" y="116" width="1" height="7" fill="#ff0000"/><rect x="458" y="119" width="7" height="1" fill="#ff0000"/><rect x="461" y="144" width="1" height="7" fill="#ff0000"/><rect x="458" y="147" width="7" height="1" fill="#ff0000"/><rect x="461" y="153" width="1" height="7" fill="#ff0000"/><rect x="458" y="156" width="7" height="1" fill="#ff0000"/><rect x="461" y="162" width="1" height="7" fill="#ff0000"/><rect x="458" y="165" width="7" height="1" fill="#ff0000"/><rect x="461" y="171" width="1" height="7" fill="#ff0000"/><rect x="458" y="174" width="7" height="1" fill="#ff0000"/><rect x="461" y="180" width="1" height="7" fill="#ff0000"/><rect x="458" y="183" width="7" height="1" fill="#ff0000"/><rect x="461" y="188" width="1" height="7" fill="#ff0000"/><rect x="458" y="191" width="7" height="1" fill="#ff0000"/><rect x="461" y="197" width="1" height="7" fill="#ff0000"/><rect x="458" y="200" width="7" height="1" fill="#ff0000"/><rect x="461" y="206" width="1" height="7" fill="#ff0000"/><rect x="458" y="209" width="7" height="1" fill="#ff0000"/><rect x="461" y="215" width="1" height="7" fill="#ff0000"/><rect x="458" y="218" width="7" height="1" fill="#ff0000"/><rect x="461" y="224" width="1" height="7" fill="#ff0000"/><rect x="458" y="227" width="7" height="1" fill="#ff0000"/><rect x="461" y="265" width="1" height="7" fill="#ff0000"/><rect x="458" y="268" width="7" height="1" fill="#ff0000"/><rect x="461" y="297" width="1" height="7" fill="#ff0000"/><rect x="458" y="300" width="7" height="1" fill="#ff0000"/><rect x="461" y="349" width="1" height="7" fill="#ff0000"/><rect x="458" y="352" width="7" height="1" fill="#ff0000"/><rect x="461" y="368" width="1" height="7" fill="#ff0000"/><rect x="458" y="371" width="7" height="1" fill="#ff0000"/><rect x="461" y="388" width="1" height="7" fill="#ff0000"/><rect x="458" y="391" width="7" height="1" fill="#ff0000"/><rect x="461" y="407" width="1" height="7" fill="#ff0000"/><rect x="458" y="410" width="7" height="1" fill="#ff0000"/><rect x="500" y="49" width="1" height="10" fill="#ff0000"/><rect x="500" y="69" width="1" height="10" fill="#ff0000"/><rect x="500" y="89" width="1" height="10" fill="#ff0000"/><rect x="500" y="109" width="1" height="10" fill="#ff0000"/><rect x="500" y="129" width="1" height="10" fill="#ff0000"/><rect x="500" y="149" width="1" height="10" fill="#ff0000"/><rect x="500" y="169" width="1" height="10" fill="#ff0000"/><rect x="500" y="189" width="1" height="10" fill="#ff0000"/><rect x="500" y="209" width="1" height="10" fill="#ff0000"/><rect x="500" y="229" width="1" height="10" fill="#ff0000"/><rect x="500" y="249" width="1" height="10" fill="#ff0000"/><rect x="500" y="269" width="1" height="10" fill="#ff0000"/><rect x="500" y="289" width="1" height="10" fill="#ff0000"/><rect x="500" y="309" width="1" height="10" fill="#ff0000"/><rect x="500" y="329" width="1" height="10" fill="#ff0000"/><rect x="500" y="349" width="1" height="10" fill="#ff0000"/><rect x="500" y="369" width="1" height="10" fill="#ff0000"/><rect x="500" y="389" width="1" height="10" fill="#ff0000"/><rect x="500" y="409" width="1" height="10" fill="#ff0000"/><rect x="500" y="58" width="1" height="7" fill="#ff0000"/><rect x="497" y="61" width="7" height="1" fill="#ff0000"/><rect x="500" y="77" width="1" height="7" fill="#ff0000"/><rect x="497" y="80" width="7" height="1" fill="#ff0000"/><rect x="500" y="97" width="1" height="7" fill="#ff0000"/><rect x="497" y="100" width="7" height="1" fill="#ff0000"/><rect x="500" y="116" width="1" height="7" fill="#ff0000"/><rect x="497" y="119" width="7" height="1" fill="#ff0000"/><rect x="500" y="144" width="1" height="7" fill="#ff0000"/><rect x="497" y="147" width="7" height="1" fill="#ff0000"/><rect x="500" y="153" width="1" height="7" fill="#ff0000"/><rect x="497" y="156" width="7" height="1" fill="#ff0000"/><rect x="500" y="162" width="1" height="7" fill="#ff0000"/><rect x="497" y="165" width="7" height="1" fill="#ff0000"/><rect x="500" y="171" width="1" height="7" fill="#ff0000"/><rect x="497" y="174" width="7" height="1" fill="#ff0000"/><rect x="500" y="180" width="1" height="7" fill="#ff0000"/><rect x="497" y="183" width="7" height="1" fill="#ff0000"/><rect x="500" y="188" width="1" height="7" fill="#ff0000"/><rect x="497" y="191" width="7" height="1" fill="#ff0000"/><rect x="500" y="197" width="1" height="7" fill="#ff0000"/><rect x="497" y="200" width="7" height="1" fill="#ff0000"/><rect x="500" y="206" width="1" height="7" fill="#ff0000"/><rect x="497" y="209" width="7" height="1" fill="#ff0000"/><rect x="500" y="215" width="1" height="7" fill="#ff0000"/><rect x="497" y="218" width="7" height="1" fill="#ff0000"/><rect x="500" y="224" width="1" height="7" fill="#ff0000"/><rect x="497" y="227" width="7" height="1" fill="#ff0000"/><rect x="500" y="265" width="1" height="7" fill="#ff0000"/><rect x="497" y="268" width="7" height="1" fill="#ff0000"/><rect x="500" y="297" width="1" height="7" fill="#ff0000"/><rect x="497" y="300" width="7" height="1" fill="#ff0000"/><rect x="500" y="349" width="1" height="7" fill="#ff0000"/><rect x="497" y="352" width="7" height="1" fill="#ff0000"/><rect x="500" y="368" width="1" height="7" fill="#ff0000"/><rect x="497" y="371" width="7" height="1" fill="#ff0000"/><rect x="500" y="388" width="1" height="7" fill="#ff0000"/><rect x="497" y="391" width="7" height="1" fill="#ff0000"/><rect x="500" y="407" width="1" height="7" fill="#ff0000"/><rect x="497" y="410" width="7" height="1" fill="#ff0000"/><rect x="72" y="138" width="473" height="1" fill="#ff0000"/><rect x="72" y="235" width="473" height="1" fill="#ff0000"/><rect x="72" y="332" width="473" height="1" fill="#ff0000"/><rect x="534" y="61" width="11" height="1" fill="#ff0000"/><rect x="534" y="80" width="11" height="1" fill="#ff0000"/><rect x="534" y="100" width="11" height="1" fill="#ff0000"/><rect x="534" y="119" width="11" height="1" fill="#ff0000"/><rect x="534" y="147" width="11" height="1" fill="#ff0000"/><rect x="534" y="156" width="11" height="1" fill="#ff0000"/><rect x="534" y="165" width="11" height="1" fill="#ff0000"/><rect x="534" y="174" width="11" height="1" fill="#ff0000"/><rect x="534" y="183" width="11" height="1" fill="#ff0000"/><rect x="534" y="191" width="11" height="1" fill="#ff0000"/><rect x="534" y="200" width="11" height="1" fill="#ff0000"/><rect x="534" y="209" width="11" height="1" fill="#ff0000"/><rect x="534" y="218" width="11" height="1" fill="#ff0000"/><rect x="534" y="227" width="11" height="1" fill="#ff0000"/><rect x="534" y="268" width="11" height="1" fill="#ff0000"/><rect x="534" y="300" width="11" height="1" fill="#ff0000"/><rect x="534" y="352" width="11" height="1" fill="#ff0000"/><rect x="534" y="371" width="11" height="1" fill="#ff0000"/><rect x="534" y="391" width="11" height="1" fill="#ff0000"/><rect x="534" y="410" width="11" height="1" fill="#ff0000"/><rect x="534" y="429" width="11" height="1" fill="#ff0000"/><rect x="69" y="39" width="471" height="3" fill="#ff0000"/><rect x="69" y="427" width="471" height="3" fill="#ff0000"/><rect x="69" y="39" width="3" height="391" fill="#ff0000"/><rect x="537" y="39" width="3" height="391" fill="#ff0000"/><rect x="133" y="105" width="4" height="4" fill="#00ffff"/><rect x="146" y="105" width="4" height="4" fill="#00ffff"/><rect x="166" y="107" width="4" height="4" fill="#00ffff"/><rect x="179" y="106" width="4" height="4" fill="#00ffff"/><rect x="192" y="107" width="4" height="4" fill="#00ffff"/><rect x="211" y="108" width="4" height="4" fill="#00ffff"/><rect x="244" y="110" width="4" height="4" fill="#00ffff"/><rect x="257" y="109" width="4" height="4" fill="#00ffff"/><rect x="277" y="107" width="4" height="4" fill="#00ffff"/><rect x="290" y="105" width="4" height="4" fill="#00ffff"/><rect x="309" y="107" width="4" height="4" fill="#00ffff"/><rect x="335" y="110" width="4" height="4" fill="#00ffff"/><rect x="348" y="114" width="4" height="4" fill="#00ffff"/><rect x="355" y="115" width="4" height="4" fill="#00ffff"/><rect x="368" y="118" width="4" height="4" fill="#00ffff"/><rect x="388" y="119" width="4" height="4" fill="#00ffff"/><rect x="401" y="117" width="4" height="4" fill="#00ffff"/><rect x="420" y="112" width="4" height="4" fill="#00ffff"/><rect x="433" y="115" width="4" height="4" fill="#00ffff"/><rect x="466" y="117" width="4" height="4" fill="#00ffff"/><rect x="211" y="60" width="4" height="4" fill="#00ffff"/><rect x="290" y="60" width="4" height="4" fill="#00ffff"/><rect x="355" y="60" width="4" height="4" fill="#00ffff"/><rect x="401" y="60" width="4" height="4" fill="#00ffff"/><rect x="133" y="154" width="4" height="4" fill="#ffff00"/><rect x="146" y="154" width="4" height="4" fill="#ffff00"/><rect x="166" y="153" width="4" height="4" fill="#ffff00"/><rect x="179" y="153" width="4" height="4" fill="#ffff00"/><rect x="192" y="152" width="4" height="4" fill="#ffff00"/><rect x="211" y="150" width="4" height="4" fill="#ffff00"/><rect x="244" y="150" width="4" height="4" fill="#ffff00"/><rect x="257" y="150" width="4" height="4" fill="#ffff00"/><rect x="277" y="151" width="4" height="4" fill="#ffff00"/><rect x="290" y="151" width="4" height="4" fill="#ffff00"/><rect x="309" y="153" width="4" height="4" fill="#ffff00"/><rect x="335" y="154" width="4" height="4" fill="#ffff00"/><rect x="348" y="154" width="4" height="4" fill="#ffff00"/><rect x="355" y="154" width="4" height="4" fill="#ffff00"/><rect x="368" y="155" width="4" height="4" fill="#ffff00"/><rect x="388" y="155" width="4" height="4" fill="#ffff00"/><rect x="401" y="155" width="4" height="4" fill="#ffff00"/><rect x="420" y="156" width="4" height="4" fill="#ffff00"/><rect x="433" y="156" width="4" height="4" fill="#ffff00"/><rect x="466" y="157" width="4" height="4" fill="#ffff00"/><rect x="466" y="228" width="4" height="4" fill="#ffff00"/><rect x="133" y="347" width="4" height="4" fill="#00ff00"/><rect x="146" y="357" width="4" height="4" fill="#00ff00"/><rect x="166" y="355" width="4" height="4" fill="#00ff00"/><rect x="179" y="353" width="4" height="4" fill="#00ff00"/><rect x="192" y="351" width="4" height="4" fill="#00ff00"/><rect x="211" y="353" width="4" height="4" fill="#00ff00"/><rect x="244" y="357" width="4" height="4" fill="#00ff00"/><rect x="257" y="363" width="4" height="4" fill="#00ff00"/><rect x="277" y="380" width="4" height="4" fill="#00ff00"/><rect x="290" y="388" width="4" height="4" fill="#00ff00"/><rect x="309" y="388" width="4" height="4" fill="#00ff00"/><rect x="335" y="396" width="4" height="4" fill="#00ff00"/><rect x="348" y="405" width="4" height="4" fill="#00ff00"/><rect x="355" y="388" width="4" height="4" fill="#00ff00"/><rect x="368" y="386" width="4" height="4" fill="#00ff00"/><rect x="388" y="368" width="4" height="4" fill="#00ff00"/><rect x="401" y="366" width="4" height="4" fill="#00ff00"/><rect x="420" y="384" width="4" height="4" fill="#00ff00"/><rect x="433" y="392" width="4" height="4" fill="#00ff00"/><rect x="466" y="427" width="4" height="4" fill="#00ff00"/>
<g fill="#ffff00"><use href="#l0" x="85" y="14"/><use href="#l1" x="93" y="14"/><use href="#l2" x="101" y="14"/><use href="#l3" x="109" y="14"/><use href="#l0" x="269" y="14"/><use href="#l4" x="277" y="14"/><use href="#l5" x="285" y="14"/><use href="#l6" x="293" y="14"/><use href="#l1" x="301" y="14"/><use href="#l7" x="309" y="14"/><use href="#l6" x="333" y="14"/><use href="#l3" x="341" y="14"/><use href="#l1" x="349" y="14"/><use href="#l5" x="357" y="14"/><use href="#l4" x="365" y="14"/><use href="#l1" x="373" y="14"/><use href="#l8" x="381" y="14"/><use href="#l6" x="405" y="14"/><use href="#l0" x="413" y="14"/><use href="#l9" x="421" y="14"/><use href="#l9" x="429" y="14"/><use href="#l10" x="437" y="14"/></g><g fill="#ffff00"><use href="#l11" x="69" y="27"/><use href="#l2" x="77" y="27"/><use href="#l12" x="93" y="27"/><use href="#l13" x="101" y="27"/><use href="#l14" x="109" y="27"/><use href="#l11" x="125" y="27"/><use href="#l9" x="133" y="27"/><use href="#l6" x="141" y="27"/><use href="#l2" x="149" y="27"/><use href="#l15" x="157" y="27"/><use href="#l6" x="165" y="27"/><use href="#l11" x="173" y="27"/><use href="#l9" x="181" y="27"/><use href="#l9" x="189" y="27"/><use href="#l9" x="197" y="27"/><use href="#l9" x="205" y="27"/><use href="#l16" x="213" y="27"/><use href="#l17" x="221" y="27"/><use href="#l18" x="229" y="27"/><use href="#l19" x="245" y="27"/><use href="#l11" x="261" y="27"/><use href="#l20" x="269" y="27"/><use href="#l12" x="285" y="27"/><use href="#l13" x="293" y="27"/><use href="#l14" x="301" y="27"/><use href="#l11" x="317" y="27"/><use href="#l9" x="325" y="27"/><use href="#l6" x="333" y="27"/><use href="#l2" x="341" y="27"/><use href="#l15" x="349" y="27"/><use href="#l9" x="357" y="27"/><use href="#l9" x="365" y="27"/><use href="#l9" x="373" y="27"/><use href="#l9" x="381" y="27"/><use href="#l9" x="389" y="27"/><use href="#l9" x="397" y="27"/><use href="#l16" x="405" y="27"/><use href="#l17" x="413" y="27"/><use href="#l18" x="421" y="27"/></g><g fill="#ffff00"><use href="#l9" x="61" y="439"/><use href="#l3" x="69" y="439"/></g><g fill="#ffff00"><use href="#l6" x="100" y="439"/><use href="#l11" x="108" y="439"/></g><g fill="#ffff00"><use href="#l6" x="139" y="439"/><use href="#l20" x="147" y="439"/></g><g fill="#ffff00"><use href="#l9" x="178" y="439"/><use href="#l9" x="186" y="439"/></g><g fill="#ffff00"><use href="#l9" x="217" y="439"/><use href="#l3" x="225" y="439"/></g><g fill="#ffff00"><use href="#l6" x="257" y="439"/><use href="#l11" x="265" y="439"/></g><g fill="#ffff00"><use href="#l6" x="296" y="439"/><use href="#l20" x="304" y="439"/></g><g fill="#ffff00"><use href="#l9" x="335" y="439"/><use href="#l9" x="343" y="439"/></g><g fill="#ffff00"><use href="#l9" x="374" y="439"/><use href="#l3" x="382" y="439"/></g><g fill="#ffff00"><use href="#l6" x="413" y="439"/><use href="#l11" x="421" y="439"/></g><g fill="#ffff00"><use href="#l6" x="453" y="439"/><use href="#l20" x="461" y="439"/></g><g fill="#ffff00"><use href="#l9" x="492" y="439"/><use href="#l9" x="500" y="439"/></g><g fill="#ffff00"><use href="#l9" x="531" y="439"/><use href="#l3" x="539" y="439"/></g><g fill="#ffff00"><use href="#l11" x="162" y="452"/><use href="#l3" x="170" y="452"/><use href="#l12" x="186" y="452"/><use href="#l13" x="194" y="452"/><use href="#l14" x="202" y="452"/></g><g fill="#ffff00"><use href="#l11" x="319" y="452"/><use href="#l0" x="327" y="452"/><use href="#l12" x="343" y="452"/><use href="#l13" x="351" y="452"/><use href="#l14" x="359" y="452"/></g><g fill="#ffff00"><use href="#l11" x="476" y="452"/><use href="#l20" x="484" y="452"/><use href="#l12" x="500" y="452"/><use href="#l13" x="508" y="452"/><use href="#l14" x="516" y="452"/></g><use href="#tiny2" x="16" y="470" fill="#ffff00"/><g fill="#ff0000"><use href="#s21" x="566" y="58"/><use href="#s22" x="572" y="58"/><use href="#s21" x="578" y="58"/></g><g fill="#ff0000"><use href="#s23" x="554" y="77"/><use href="#s24" x="560" y="77"/><use href="#s21" x="566" y="77"/><use href="#s22" x="572" y="77"/><use href="#s21" x="578" y="77"/></g><g fill="#ff0000"><use href="#s23" x="554" y="97"/><use href="#s25" x="560" y="97"/><use href="#s21" x="566" y="97"/><use href="#s22" x="572" y="97"/><use href="#s21" x="578" y="97"/></g><g fill="#ff0000"><use href="#s23" x="554" y="116"/><use href="#s26" x="560" y="116"/><use href="#s21" x="566" y="116"/><use href="#s22" x="572" y="116"/><use href="#s21" x="578" y="116"/></g><g fill="#ff0000"><use href="#s23" x="554" y="135"/><use href="#s27" x="560" y="135"/><use href="#s21" x="566" y="135"/><use href="#s22" x="572" y="135"/><use href="#s21" x="578" y="135"/></g><g fill="#ff0000"><use href="#s28" x="554" y="144"/><use href="#s21" x="560" y="144"/><use href="#s21" x="566" y="144"/><use href="#s22" x="572" y="144"/><use href="#s21" x="578" y="144"/></g><g fill="#ff0000"><use href="#s29" x="554" y="153"/><use href="#s30" x="560" y="153"/><use href="#s21" x="566" y="153"/><use href="#s22" x="572" y="153"/><use href="#s21" x="578" y="153"/></g><g fill="#ff0000"><use href="#s29" x="554" y="162"/><use href="#s28" x="560" y="162"/><use href="#s21" x="566" y="162"/><use href="#s22" x="572" y="162"/><use href="#s21" x="578" y="162"/></g><g fill="#ff0000"><use href="#s29" x="554" y="171"/><use href="#s29" x="560" y="171"/><use href="#s21" x="566" y="171"/><use href="#s22" x="572" y="171"/><use href="#s21" x="578" y="171"/></g><g fill="#ff0000"><use href="#s29" x="554" y="180"/><use href="#s31" x="560" y="180"/><use href="#s21" x="566" y="180"/><use href="#s22" x="572" y="180"/><use href="#s21" x="578" y="180"/></g><g fill="#ff0000"><use href="#s29" x="554" y="188"/><use href="#s32" x="560" y="188"/><use href="#s21" x="566" y="188"/><use href="#s22" x="572" y="188"/><use href="#s21" x="578" y="188"/></g><g fill="#ff0000"><use href="#s29" x="554" y="197"/><use href="#s27" x="560" y="197"/><use href="#s21" x="566" y="197"/><use href="#s22" x="572" y="197"/><use href="#s21" x="578" y="197"/></g><g fill="#ff0000"><use href="#s29" x="554" y="206"/><use href="#s26" x="560" y="206"/><use href="#s21" x="566" y="206"/><use href="#s22" x="572" y="206"/><use href="#s21" x="578" y="206"/></g><g fill="#ff0000"><use href="#s29" x="554" y="215"/><use href="#s25" x="560" y="215"/><use href="#s21" x="566" y="215"/><use href="#s22" x="572" y="215"/><use href="#s21" x="578" y="215"/></g><g fill="#ff0000"><use href="#s29" x="554" y="224"/><use href="#s24" x="560" y="224"/><use href="#s21" x="566" y="224"/><use href="#s22" x="572" y="224"/><use href="#s21" x="578" y="224"/></g><g fill="#ff0000"><use href="#s29" x="554" y="232"/><use href="#s21" x="560" y="232"/><use href="#s21" x="566" y="232"/><use href="#s22" x="572" y="232"/><use href="#s21" x="578" y="232"/></g><g fill="#ff0000"><use href="#s24" x="560" y="265"/><use href="#s21" x="566" y="265"/><use href="#s22" x="572" y="265"/><use href="#s21" x="578" y="265"/></g><g fill="#ff0000"><use href="#s32" x="566" y="297"/><use href="#s22" x="572" y="297"/><use href="#s21" x="578" y="297"/></g><g fill="#ff0000"><use href="#s21" x="566" y="329"/><use href="#s22" x="572" y="329"/><use href="#s21" x="578" y="329"/></g><g fill="#ff0000"><use href="#s29" x="560" y="349"/><use href="#s21" x="566" y="349"/><use href="#s22" x="572" y="349"/><use href="#s21" x="578" y="349"/></g><g fill="#ff0000"><use href="#s31" x="560" y="368"/><use href="#s21" x="566" y="368"/><use href="#s22" x="572" y="368"/><use href="#s21" x="578" y="368"/></g><g fill="#ff0000"><use href="#s32" x="560" y="388"/><use href="#s21" x="566" y="388"/><use href="#s22" x="572" y="388"/><use href="#s21" x="578" y="388"/></g><g fill="#ff0000"><use href="#s27" x="560" y="407"/><use href="#s21" x="566" y="407"/><use href="#s22" x="572" y="407"/><use href="#s21" x="578" y="407"/></g><g fill="#ff0000"><use href="#s26" x="560" y="426"/><use href="#s21" x="566" y="426"/><use href="#s22" x="572" y="426"/><use href="#s21" x="578" y="426"/></g><g fill="#ff0000"><use href="#s33" x="589" y="86"/><use href="#s34" x="595" y="86"/><use href="#s35" x="601" y="86"/><use href="#s36" x="607" y="86"/></g><g fill="#ff0000"><use href="#s37" x="589" y="183"/><use href="#s38" x="595" y="183"/><use href="#s39" x="601" y="183"/><use href="#s34" x="613" y="183"/><use href="#s40" x="619" y="183"/><use href="#s41" x="625" y="183"/><use href="#s36" x="631" y="183"/></g><g fill="#ff0000"><use href="#s42" x="589" y="280"/><use href="#s37" x="595" y="280"/><use href="#s43" x="601" y="280"/><use href="#s34" x="607" y="280"/><use href="#s44" x="613" y="280"/><use href="#s37" x="619" y="280"/><use href="#s42" x="625" y="280"/><use href="#s36" x="631" y="280"/></g><g fill="#ff0000"><use href="#s45" x="589" y="377"/><use href="#s46" x="595" y="377"/><use href="#s34" x="601" y="377"/><use href="#s47" x="607" y="377"/><use href="#s36" x="613" y="377"/></g></g>
</svg>
</body></html>
